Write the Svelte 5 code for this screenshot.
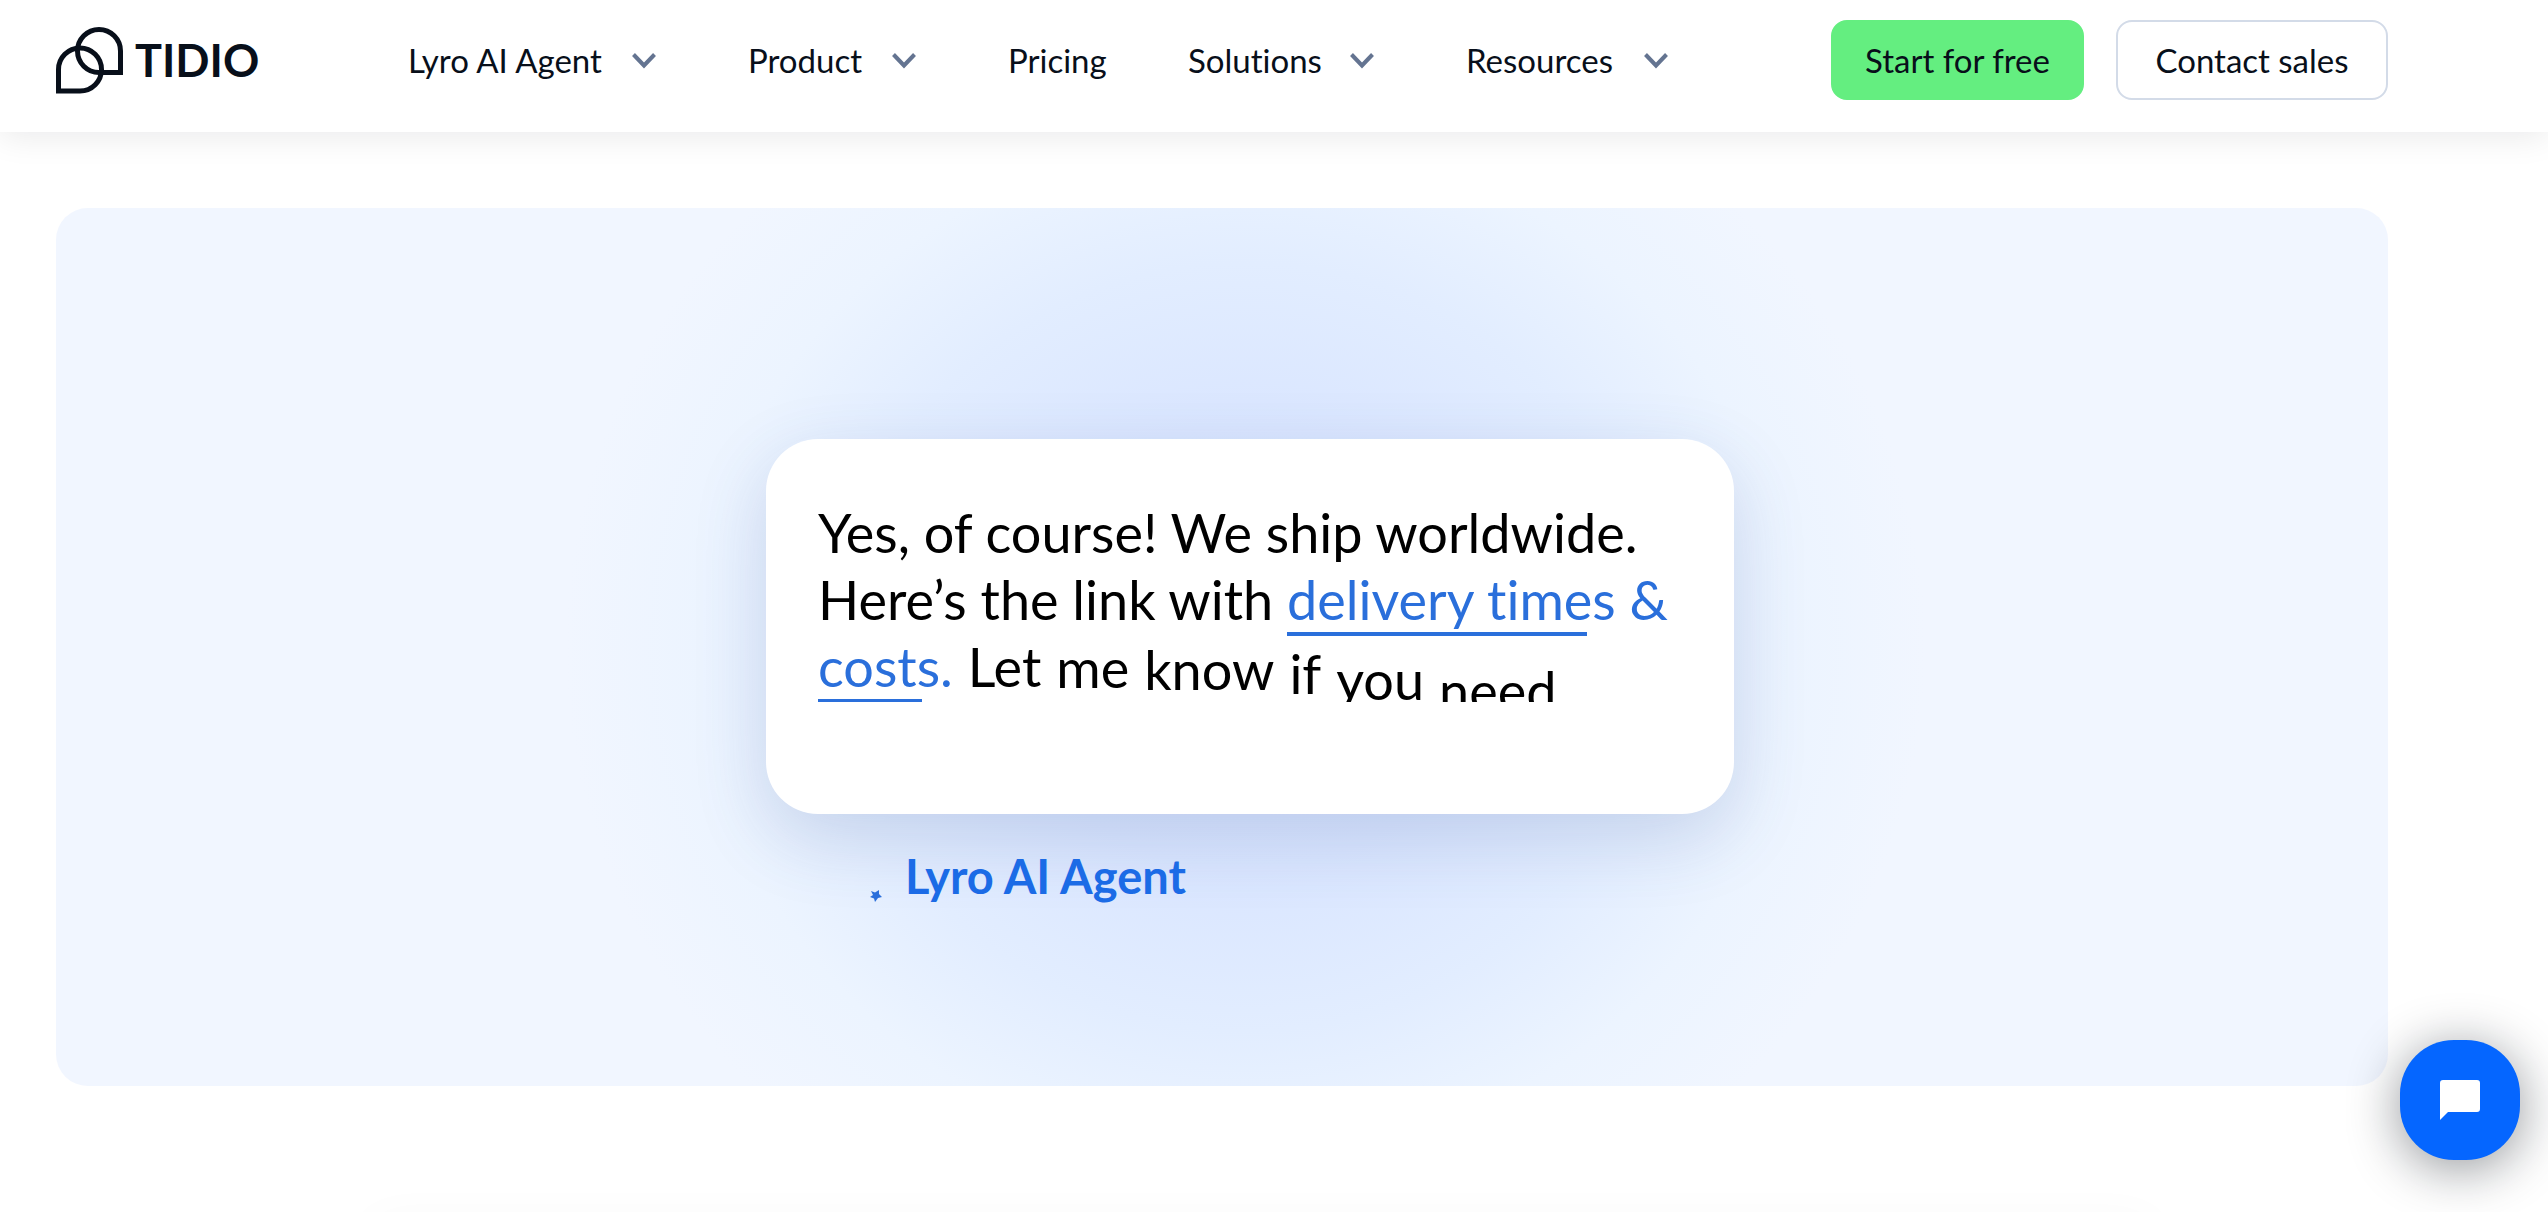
<script>
  const menu = [
    { label: 'Lyro AI Agent', open: true },
    { label: 'Product', open: true },
    { label: 'Pricing', open: false },
    { label: 'Solutions', open: true },
    { label: 'Resources', open: true }
  ];

  const falling = [
    { word: 'Let', drop: 0 },
    { word: 'me', drop: 1 },
    { word: 'know', drop: 3 },
    { word: 'if', drop: 7 },
    { word: 'you', drop: 13 },
    { word: 'need', drop: 24 }
  ];
</script>

<header>
  <a class="logo" href="/" aria-label="Tidio">
    <svg class="mark" viewBox="0 0 68 68" aria-hidden="true">
      <path d="M64.500 46.500H43A21.500 21.500 0 1 1 64.500 25Z" />
      <path d="M2.500 65V43.500A21.500 21.500 0 1 1 24 65Z" />
    </svg>
    <span class="name">TIDIO</span>
  </a>
  <nav>
    {#each menu as item}
      {#if item.open}
        <button class="item" type="button">
          {item.label}
          <svg class="chevron" viewBox="0 0 48 48" aria-hidden="true"><path d="M13.500 18.500L24 29.500L34.500 18.500" /></svg>
        </button>
      {:else}
        <a class="item" href="/pricing">{item.label}</a>
      {/if}
    {/each}
  </nav>
  <div class="actions">
    <a class="btn primary" href="/register">Start for free</a>
    <a class="btn" href="/contact">Contact sales</a>
  </div>
</header>

<main>
  <section class="stage">
    <div class="message">
      <div class="bubble">
        <p>Yes, of course! We ship worldwide.</p>
        <p>Here’s the link with <a class="link times" href="/delivery">delivery times &amp;</a></p>
        <p class="last">
          <span><a class="link costs" href="/delivery">costs.</a></span>
          {#each falling as { word, drop }}
            <span class="word" style="--drop: {drop}px">{word}</span>
          {/each}
        </p>
      </div>
      <div class="author">
        <svg class="spark" viewBox="0 0 12 12" aria-hidden="true"><path d="M1 1L5 2.500L9 0L9 4L12 7L8 8L5 12L4 8.500L0 7L3 5Z" /></svg>
        <span>Lyro AI Agent</span>
      </div>
    </div>
  </section>
  <div class="next"></div>
</main>

<button class="chat" type="button" aria-label="Open chat">
  <svg viewBox="0 0 40 40" aria-hidden="true"><path d="M3 0H37A3 3 0 0 1 40 3V29A3 3 0 0 1 37 32H8L0 40V3A3 3 0 0 1 3 0Z" /></svg>
</button>

<style>
  :global(body) {
    margin: 0;
    background: #fff;
    color: #080f1a;
    font-family: Lato, "Liberation Sans", sans-serif;
    font-variant-ligatures: none;
    overflow: hidden;
  }

  a {
    color: inherit;
    text-decoration: none;
  }

  header {
    position: relative;
    display: flex;
    align-items: center;
    box-sizing: border-box;
    height: 132px;
    padding: 0 160px 12px 56px;
    background: #fff;
    box-shadow: 0 4px 32px rgba(8, 15, 26, 0.09);
  }

  .logo {
    display: flex;
    align-items: center;
    gap: 11px;
    width: 352px;
  }

  .mark {
    width: 68px;
    height: 68px;
    fill: none;
    stroke: #080f1a;
    stroke-width: 5;
  }

  .name {
    font-size: 45px;
    line-height: 48px;
    font-weight: 700;
  }

  nav {
    display: grid;
    grid-template-columns: 260px 180px 100px 198px 214px;
    gap: 80px;
  }

  .item {
    display: flex;
    align-items: center;
    justify-content: space-between;
    height: 48px;
    padding: 0;
    border: 0;
    background: none;
    color: inherit;
    font: inherit;
    font-size: 33px;
    font-variant-ligatures: none;
    line-height: 48px;
    white-space: nowrap;
  }

  .chevron {
    width: 48px;
    height: 48px;
    fill: none;
    stroke: #647491;
    stroke-width: 4;
  }

  .actions {
    display: flex;
    gap: 32px;
    margin-left: auto;
  }

  .btn {
    box-sizing: border-box;
    width: 272px;
    height: 80px;
    border: 2px solid #d3dbe8;
    border-radius: 16px;
    font-size: 33px;
    line-height: 76px;
    text-align: center;
  }

  .btn.primary {
    width: 253px;
    border-color: #64ee80;
    background: #64ee80;
  }

  main {
    padding: 76px 160px 0 56px;
  }

  .stage {
    box-sizing: border-box;
    height: 878px;
    padding-top: 231px;
    border-radius: 32px;
    background:
      radial-gradient(ellipse 680px 640px at 51% 50%, #d6e2ff 0%, #dae6ff 35%, #e2edff 60%, #ecf4ff 80%, rgba(241, 246, 255, 0) 100%),
      #f1f6ff;
  }

  .message {
    width: 968px;
    margin-left: 710px;
  }

  .bubble {
    box-sizing: border-box;
    height: 375px;
    padding: 60px 0 0 52px;
    border-radius: 52px;
    background: #fff;
    color: #000;
    font-size: 54px;
    line-height: 67px;
    white-space: nowrap;
    box-shadow: 0 24px 72px rgba(60, 90, 150, 0.18);
  }

  p {
    margin: 0;
  }

  .link {
    padding-bottom: 4px;
    color: #2a6fdb;
    background-image: linear-gradient(#2a6fdb, #2a6fdb);
    background-repeat: no-repeat;
    background-position: left bottom;
  }

  .times {
    background-size: 300px 4px;
  }

  .costs {
    background-size: 104px 4px;
  }

  .last {
    display: flex;
    gap: 15px;
    height: 69px;
    overflow: hidden;
  }

  .word {
    transform: translateY(var(--drop));
  }

  .author {
    display: flex;
    align-items: center;
    gap: 23px;
    padding: 36px 0 0 104px;
    color: #1b6be6;
    font-size: 47px;
    line-height: 48px;
    font-weight: 700;
  }

  .spark {
    width: 12px;
    height: 12px;
    margin-top: 40px;
    fill: #2a6fdb;
  }

  .next {
    height: 40px;
    margin: 134px 232px 0 312px;
    border-radius: 32px;
    box-shadow: 0 0 48px rgba(0, 0, 0, 0.03);
  }

  .chat {
    position: fixed;
    right: 28px;
    bottom: 52px;
    display: grid;
    place-items: center;
    width: 120px;
    height: 120px;
    padding: 0;
    border: 0;
    border-radius: 54px;
    background: #0566ff;
    box-shadow: 0 8px 52px rgba(8, 15, 26, 0.44);
  }

  .chat svg {
    width: 40px;
    height: 40px;
    fill: #fff;
  }
</style>
